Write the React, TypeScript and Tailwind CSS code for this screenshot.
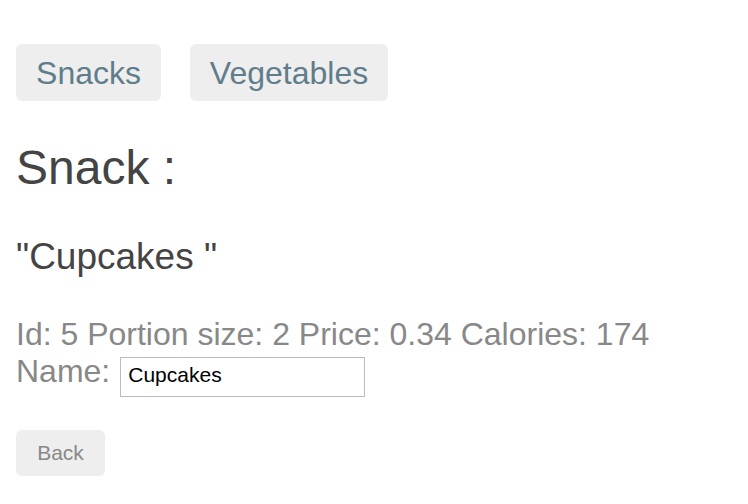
export default function App() {
  const snack = { id: 5, name: "Cupcakes", portion: 2, price: 0.34, calories: 174 };

  return (
    <div className="min-h-screen bg-white px-4 font-['Liberation_Sans',Arial,sans-serif]">
      <nav className="flex gap-[29px] pt-[44px]">
        <a className="flex h-[57px] w-[145px] items-center justify-center rounded-md bg-[#eeeeee] pt-[1px] text-[32px] text-[#607d8b]">
          Snacks
        </a>
        <a className="flex h-[57px] w-[198px] items-center justify-center rounded-md bg-[#eeeeee] pt-[1px] text-[32px] text-[#607d8b]">
          Vegetables
        </a>
      </nav>

      <h2 className="mt-[43px] text-[48px] leading-[48px] text-[#444444]">Snack :</h2>

      <h3 className="mt-[46px] text-[37px] leading-[37px] text-[#444444]">
        "{snack.name} "
      </h3>

      <div className="mt-[41px] text-[32px] leading-[37px] text-[#888888]">
        <div>
          Id: {snack.id} Portion size: {snack.portion} Price: {snack.price} Calories: {snack.calories}
        </div>
        <div className="flex items-baseline">
          <span>Name:</span>
          <input
            defaultValue={snack.name}
            className="ml-[10px] h-[40px] w-[245px] border border-[#bbbbbb] px-[7px] pb-[4px] text-[21px] text-black outline-none"
          />
        </div>
      </div>

      <button className="mt-[33px] h-[46px] w-[89px] rounded-md bg-[#eeeeee] text-[21px] text-[#888888]">
        Back
      </button>
    </div>
  );
}
